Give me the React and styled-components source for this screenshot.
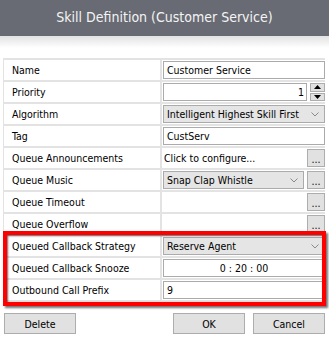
import React from "react"
import styled, { createGlobalStyle } from "styled-components"

const GlobalStyle = createGlobalStyle`
  body {
    margin: 0;
    background: #fff;
    font-family: "DejaVu Sans Condensed", "DejaVu Sans", sans-serif;
    font-size: 10.5px;
    color: #000;
  }
`

const Dialog = styled.div`
  width: 329px;
  height: 337px;
  background: #fff;
  overflow: hidden;
`

const TitleBar = styled.header`
  height: 36px;
  background: #686b73;
  color: #f4f4f4;
  font-size: 14px;
  display: flex;
  align-items: center;
  justify-content: center;
  padding-bottom: 2px;
  box-sizing: border-box;
`

const Fade = styled.div`
  height: 12px;
  background: linear-gradient(#e2e2e2, #fff);
`

const Body = styled.div`
  padding: 10px 4px 0 3px;
`

const Table = styled.div`
  position: relative;
  border-top: 2px solid #e3e3e3;
  border-left: 1px solid #e3e3e3;
`

const Row = styled.div`
  display: grid;
  grid-template-columns: 158px 1fr;
  height: 20px;
  border-bottom: 2px solid #e3e3e3;
`

const Label = styled.div`
  display: flex;
  align-items: center;
  padding-left: 8px;
  border-right: 2px solid #e3e3e3;
  white-space: nowrap;
`

const Value = styled.div`
  display: flex;
  align-items: center;
  gap: 3px;
  padding-left: 1px;
  min-width: 0;
`

const Field = styled.div`
  flex: 1;
  height: 18px;
  box-sizing: border-box;
  border: 1px solid #ababab;
  background: #fff;
  display: flex;
  align-items: center;
  justify-content: ${({ align }) => align || "flex-start"};
  padding: 0 ${({ align }) => (align === "flex-end" ? "2px" : "3px")};
  white-space: nowrap;
`

const Plain = styled.div`
  flex: 1;
  padding-left: 1px;
  white-space: nowrap;
`

const Combo = styled(Field)`
  background: #e5e5e5;
  justify-content: space-between;
  padding-right: 5px;
`

const Dots = styled.div`
  width: 18px;
  height: 18px;
  box-sizing: border-box;
  border: 1px solid #adadad;
  background: #e1e1e1;
  display: flex;
  align-items: flex-end;
  justify-content: center;
  line-height: 14px;
`

const Spin = styled.div`
  width: 15px;
  height: 18px;
  display: flex;
  flex-direction: column;
  gap: 1px;
`

const SpinButton = styled.div`
  flex: 1;
  border: 1px solid #adadad;
  background: #e1e1e1;
  display: flex;
  align-items: center;
  justify-content: center;
`

const Highlight = styled.div`
  position: absolute;
  left: -1px;
  top: 171px;
  width: 323px;
  height: 75px;
  box-sizing: border-box;
  border: 4px solid #ff0000;
  box-shadow: 2px 2px 2px rgba(0, 0, 0, 0.55), inset 1px 1px 2px rgba(0, 0, 0, 0.6);
  pointer-events: none;
`

const Footer = styled.div`
  display: flex;
  justify-content: space-between;
  margin-top: 11px;
  padding-left: 1px;
`

const ButtonGroup = styled.div`
  display: flex;
  gap: 8px;
`

const Button = styled.div`
  width: 72px;
  height: 21px;
  box-sizing: border-box;
  border: 1px solid #adadad;
  background: #e1e1e1;
  display: flex;
  align-items: center;
  justify-content: center;
`

const Chevron = () => (
  <svg width="8" height="5" viewBox="0 0 8 5">
    <path d="M0.5 0.5 L4 4 L7.5 0.5" fill="none" stroke="#8a8a8a" strokeWidth="1" />
  </svg>
)

const Arrow = ({ up }) => (
  <svg width="7" height="4" viewBox="0 0 7 4">
    <path d={up ? "M0 4 L3.5 0 L7 4 Z" : "M0 0 L3.5 4 L7 0 Z"} fill="#000" />
  </svg>
)

const rows = [
  { label: "Name", kind: "field", value: "Customer Service" },
  { label: "Priority", kind: "spin", value: "1" },
  { label: "Algorithm", kind: "combo", value: "Intelligent Highest Skill First" },
  { label: "Tag", kind: "field", value: "CustServ" },
  { label: "Queue Announcements", kind: "plain", value: "Click to configure...", dots: true },
  { label: "Queue Music", kind: "combo", value: "Snap Clap Whistle", dots: true },
  { label: "Queue Timeout", kind: "plain", value: "", dots: true },
  { label: "Queue Overflow", kind: "plain", value: "", dots: true },
  { label: "Queued Callback Strategy", kind: "combo", value: "Reserve Agent" },
  { label: "Queued Callback Snooze", kind: "field", value: "0 : 20 : 00", align: "center" },
  { label: "Outbound Call Prefix", kind: "field", value: "9" },
]

const renderValue = (row) => {
  if (row.kind === "combo") {
    return (
      <Combo>
        <span>{row.value}</span>
        <Chevron />
      </Combo>
    )
  }
  if (row.kind === "spin") {
    return (
      <>
        <Field align="flex-end">{row.value}</Field>
        <Spin>
          <SpinButton><Arrow up /></SpinButton>
          <SpinButton><Arrow /></SpinButton>
        </Spin>
      </>
    )
  }
  if (row.kind === "plain") return <Plain>{row.value}</Plain>
  return <Field align={row.align}>{row.value}</Field>
}

const App = () => (
  <>
    <GlobalStyle />
    <Dialog>
      <TitleBar>Skill Definition (Customer Service)</TitleBar>
      <Fade />
      <Body>
        <Table>
          {rows.map((row) => (
            <Row key={row.label}>
              <Label>{row.label}</Label>
              <Value>
                {renderValue(row)}
                {row.dots && <Dots>...</Dots>}
              </Value>
            </Row>
          ))}
          <Highlight />
        </Table>
        <Footer>
          <Button>Delete</Button>
          <ButtonGroup>
            <Button>OK</Button>
            <Button>Cancel</Button>
          </ButtonGroup>
        </Footer>
      </Body>
    </Dialog>
  </>
)

export default App
